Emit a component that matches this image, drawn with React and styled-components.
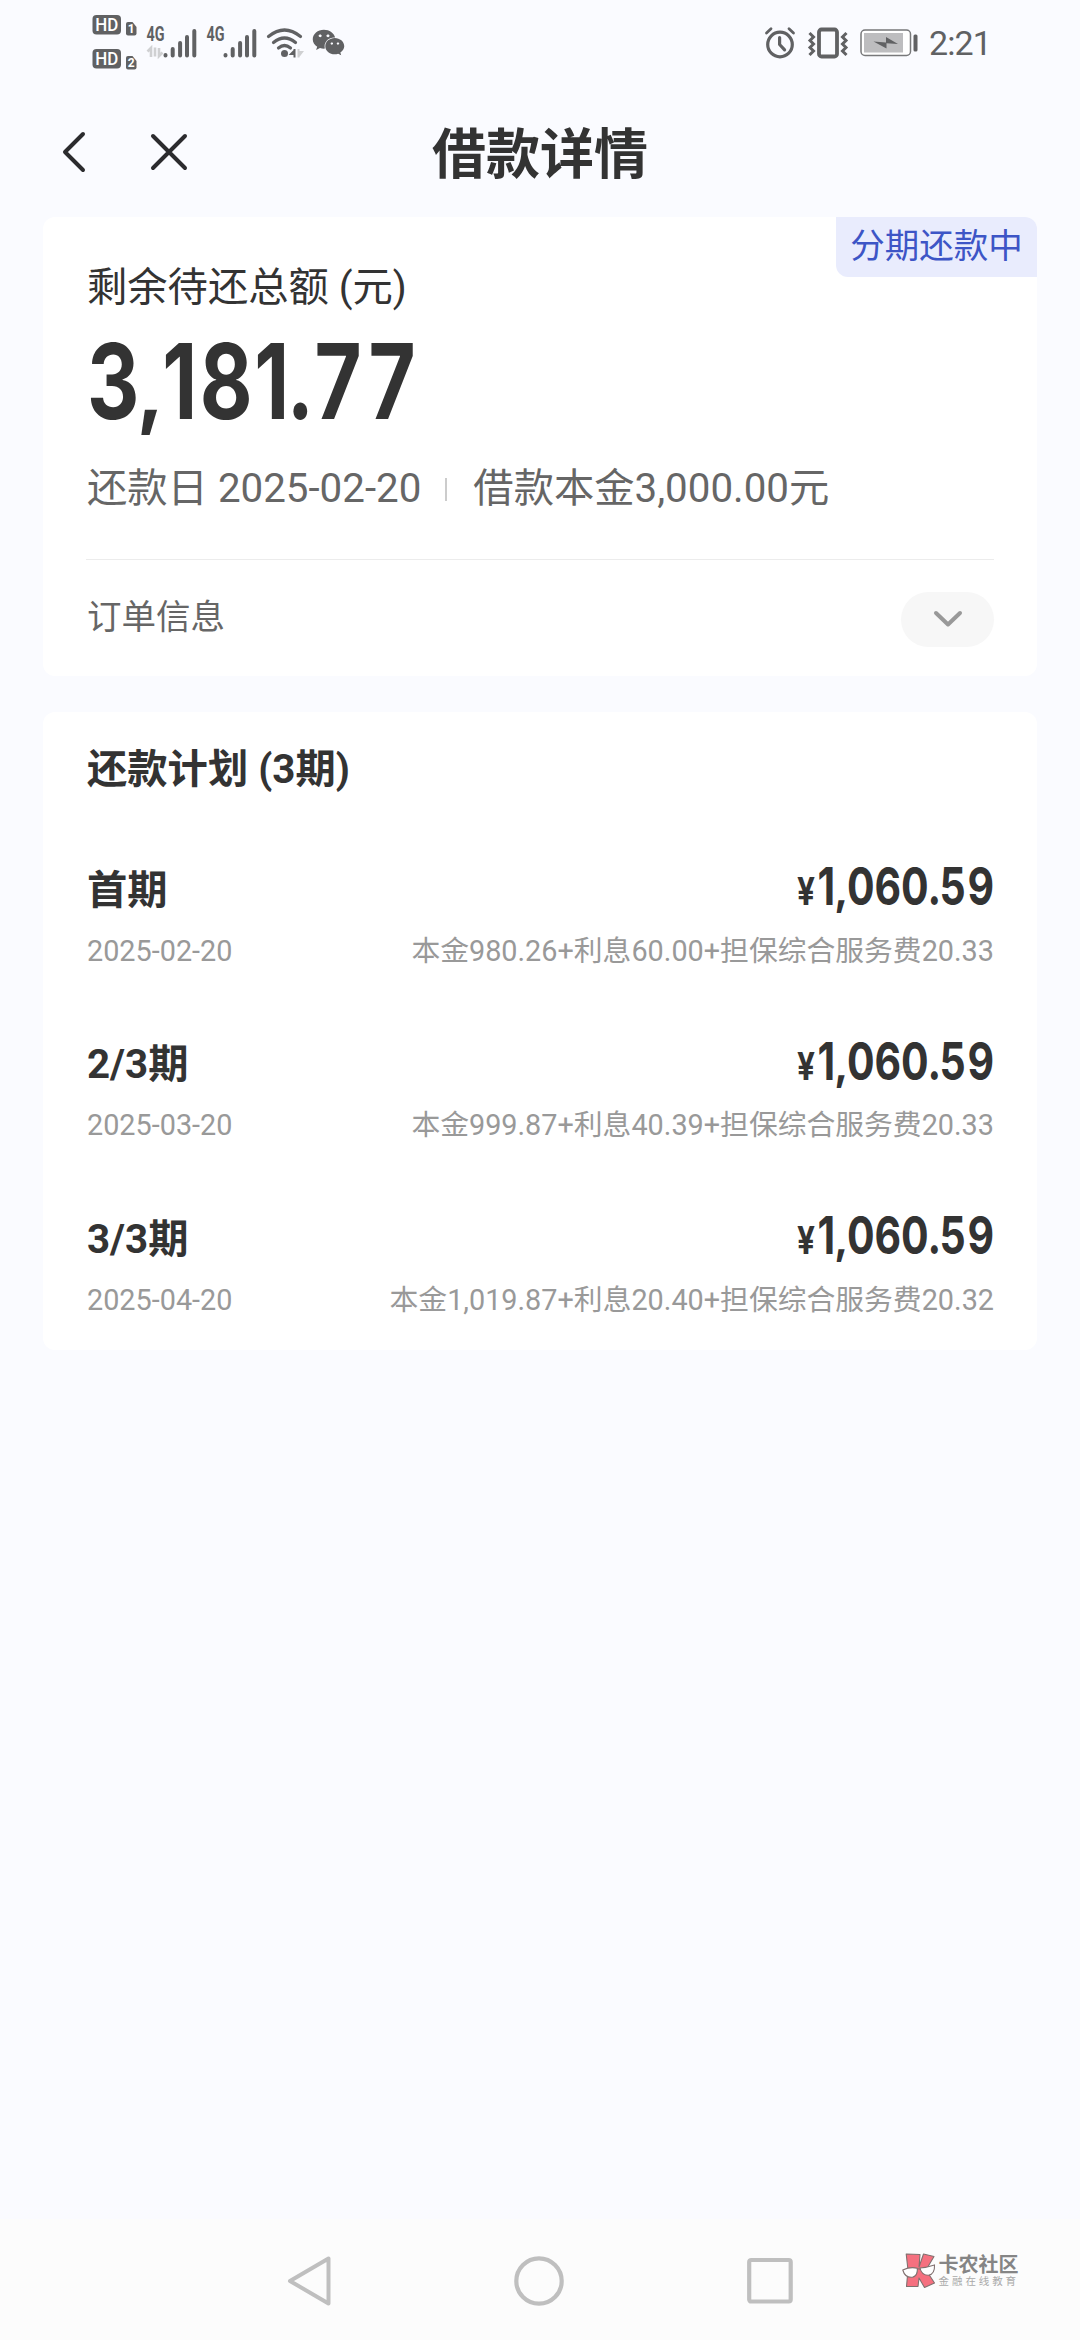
import styled, { createGlobalStyle } from "styled-components";
import { useState } from "react";
import { FaWeixin } from "react-icons/fa";

const COLORS = {
  page: '#fafbff',
  white: '#fff',
  dark: '#333',
  medium: '#666',
  light: '#999',
  status: '#606163',
  blue: '#3d55c6',
  paleBlue: '#e9ecfd',
  nav: '#fcfcfc',
  navIcon: '#bfbfbf',
};

const FONT = `Roboto, "Noto Sans CJK SC", sans-serif`;

const installments = [
  { title: '首期', date: '2025-02-20', amount: '1,060.59', detail: '本金980.26+利息60.00+担保综合服务费20.33' },
  { title: '2/3期', date: '2025-03-20', amount: '1,060.59', detail: '本金999.87+利息40.39+担保综合服务费20.33' },
  { title: '3/3期', date: '2025-04-20', amount: '1,060.59', detail: '本金1,019.87+利息20.40+担保综合服务费20.32' },
];

const HdIcon = ({ sim }) => (
  <svg width="46" height="21" viewBox="0 0 46 21">
    <rect x="0.5" y="0" width="28.5" height="19.5" rx="4" fill={COLORS.status} />
    <SvgText x="14.8" y="16" size="17.5" weight="500" fill="#fff" textLength="23">HD</SvgText>
    <path d="M34 10V18.5q0 2 2 2h6.500q2 0 2-2V12l-4-5H36q-2 0-2 2z" fill={COLORS.status} />
    <SvgText x="39.2" y="18.400" size="12" weight="700" fill="#fff">{sim}</SvgText>
  </svg>
);

const SignalIcon = ({ data }) => (
  <svg width="52" height="34" viewBox="0 0 52 34">
    <SvgText x="9.500" y="15" size="19.500" weight="700" fill={COLORS.status} textLength="18">4G</SvgText>
    {data && (
      <path d="M5 31V22L1.500 25.500M9 21.500V30.500M13 22v8l3.500-3.500" fill="none" stroke="#cfd0d2" strokeWidth="2.600" />
    )}
    <g stroke={COLORS.status} strokeWidth="4" strokeLinecap="round">
      <path d="M19.500 29v0.400M26.700 23v6.400M34.100 17v12.400M41 11v18.400M48.300 5v24.400" />
    </g>
  </svg>
);

const WifiIcon = () => (
  <svg width="38" height="32" viewBox="0 0 38 32">
    <g fill="none" stroke={COLORS.status} strokeWidth="3.200" strokeLinecap="round">
      <path d="M2.500 9.500Q18.500-3.500 34.500 9.500" />
      <path d="M7.500 15.500Q18.500 6.500 29.500 15.500" />
      <path d="M12.500 21Q18.500 16 24.500 21" />
    </g>
    <circle cx="18.500" cy="26.500" r="3.500" fill={COLORS.status} />
    <path d="M28.500 22v8.500M29 23l-4 4h4" stroke={COLORS.status} strokeWidth="2" fill={COLORS.status} />
    <path d="M32.500 22v8.500M33 29l3-4h-3" stroke="#cfd0d2" strokeWidth="2" fill="#cfd0d2" />
  </svg>
);

const AlarmIcon = () => (
  <svg width="32" height="33" viewBox="0 0 32 33">
    <g fill="none" stroke={COLORS.status} strokeWidth="3.200" strokeLinecap="round" strokeLinejoin="round">
      <circle cx="16" cy="18.500" r="12.300" />
      <path d="M15.600 11.500v7l5 5.300" />
      <path d="M2.500 7L7 2.800M29.500 7L25 2.800" strokeWidth="2.800" />
    </g>
  </svg>
);

const VibrateIcon = () => (
  <svg width="42" height="32" viewBox="0 0 42 32">
    <g fill="none" stroke={COLORS.status} strokeWidth="3">
      <rect x="12" y="2.500" width="18" height="27" rx="2.500" strokeWidth="3.800" />
      <path d="M2.500 6l4 4-3.500 3.500 3.500 3.500-3.500 3.500 3.500 3.500-4 4" />
      <path d="M39.500 6l-4 4 3.500 3.500-3.500 3.500 3.500 3.500-3.500 3.500 4 4" />
    </g>
  </svg>
);

const BatteryIcon = () => (
  <svg width="58" height="28" viewBox="0 0 58 28">
    <rect x="1" y="1" width="49.500" height="25.500" rx="4" fill="#fff" stroke="#77787a" strokeWidth="1.500" />
    <rect x="4" y="4" width="39" height="19.500" fill="#bdbdbf" />
    <path d="M13.500 12.500L26 13.500V8l12 7-11.500-.8v5.300z" fill={COLORS.status} />
    <rect x="53.500" y="5.500" width="4" height="17" rx="1.500" fill={COLORS.status} />
  </svg>
);

const BackIcon = () => (
  <svg width="24" height="42" viewBox="0 0 24 42">
    <path d="M21 3L3 21l18 18" fill="none" stroke="#2b2b2e" strokeWidth="4" strokeLinecap="round" strokeLinejoin="round" />
  </svg>
);

const CloseIcon = () => (
  <svg width="38" height="38" viewBox="0 0 38 38">
    <path d="M3 3l32 32M35 3L3 35" fill="none" stroke="#2b2b2e" strokeWidth="4" strokeLinecap="round" />
  </svg>
);

const ChevronIcon = () => (
  <svg width="30" height="18" viewBox="0 0 30 18">
    <path d="M3 3l12 11.500L27 3" fill="none" stroke={COLORS.light} strokeWidth="4" strokeLinecap="round" strokeLinejoin="round" />
  </svg>
);

const KanongLogo = () => (
  <svg width="34" height="36" viewBox="0 0 34 36">
    <g fill="#f5707f" stroke="#80706f" strokeWidth="1.100" strokeLinejoin="round">
      <path d="M4.200 1L18 1.500 17 14 21.500 1 32 3.500 24 17l8.500 13-10 4.500L17 25l-1 8.500H4.500L6 17z" />
    </g>
    <g fill="#fff" stroke="#80706f" strokeWidth="1.100">
      <path d="M0.800 17Q8 13.500 15.300 15.200 16 22.500 10.500 24.200 3 25 0.800 17z" />
      <path d="M18 15Q25 14.500 32.500 12 33 21 26.500 22.300 19.500 22.300 18 15z" />
      <path d="M15.300 16.500q1.500-1.500 3 0" fill="none" />
    </g>
  </svg>
);

const Amount = ({ value, large }) => (
  <Figure large={large}>
    {value.split('').map((char, i) => (
      <Glyph key={i} char={char}>{char}</Glyph>
    ))}
  </Figure>
);

const App = () => {
  const [open, setOpen] = useState(false);

  return (
    <Wrapper>
      <GlobalStyle />
      <StatusBar>
        <StatusGroup>
          <HdColumn>
            <HdIcon sim="1" />
            <HdIcon sim="2" />
          </HdColumn>
          <SignalIcon data />
          <SignalIcon />
          <WifiIcon />
          <FaWeixin size="33" />
        </StatusGroup>
        <StatusGroup right>
          <AlarmIcon />
          <VibrateIcon />
          <BatteryIcon />
          <Time>2:21</Time>
        </StatusGroup>
      </StatusBar>

      <Header>
        <HeaderActions>
          <IconBtn><BackIcon /></IconBtn>
          <IconBtn><CloseIcon /></IconBtn>
        </HeaderActions>
        <Title>借款详情</Title>
      </Header>

      <Main>
        <SummaryCard>
          <Badge>分期还款中</Badge>
          <Label>剩余待还总额 (元)</Label>
          <Amount value="3,181.77" large />
          <LoanInfo>
            <span>还款日 2025-02-20</span>
            <Separator />
            <span>借款本金3,000.00元</span>
          </LoanInfo>
          <OrderRow>
            <OrderLabel>订单信息</OrderLabel>
            <ToggleBtn onClick={() => setOpen(!open)}>
              <ChevronIcon />
            </ToggleBtn>
          </OrderRow>
        </SummaryCard>

        <PlanCard>
          <PlanTitle>还款计划 (3期)</PlanTitle>
          {installments.map(({ title, date, amount, detail }) => (
            <Installment key={date}>
              <InstallmentLine>
                <Period>{title}</Period>
                <Price>
                  <Currency>¥</Currency>
                  <Amount value={amount} />
                </Price>
              </InstallmentLine>
              <InstallmentDetail>
                <span>{date}</span>
                <span>{detail}</span>
              </InstallmentDetail>
            </Installment>
          ))}
        </PlanCard>
      </Main>

      <NavigationBar>
        <svg width="44" height="52" viewBox="0 0 44 52">
          <path d="M41.500 3.500v45L3 26z" fill="none" stroke={COLORS.navIcon} strokeWidth="4" strokeLinejoin="round" />
        </svg>
        <svg width="50" height="52" viewBox="0 0 50 52">
          <circle cx="25" cy="26" r="22.700" fill="none" stroke={COLORS.navIcon} strokeWidth="4.200" />
        </svg>
        <svg width="46" height="52" viewBox="0 0 46 52">
          <rect x="2.200" y="5" width="41.500" height="41.500" rx="2" fill="none" stroke={COLORS.navIcon} strokeWidth="4.200" />
        </svg>
        <Brand>
          <KanongLogo />
          <BrandText>
            <BrandName>卡农社区</BrandName>
            <BrandSlogan>金融在线教育</BrandSlogan>
          </BrandText>
        </Brand>
      </NavigationBar>
    </Wrapper>
  )
}

const GlobalStyle = createGlobalStyle`
  * {
    box-sizing: border-box;
  }
  body {
    margin: 0;
    background: ${COLORS.page};
    font-family: ${FONT};
  }
  svg {
    display: block;
    flex-shrink: 0;
    overflow: visible;
  }
`;
const SvgText = styled.text.attrs(({ textLength }) => ({
  textAnchor: 'middle',
  lengthAdjust: textLength ? 'spacingAndGlyphs' : undefined,
})).withConfig({ shouldForwardProp: prop => !['size', 'weight'].includes(prop) })`
  font-family: ${FONT};
  font-size: ${ ({size}) => size }px;
  font-weight: ${ ({weight}) => weight };
`;
const Wrapper = styled.div`
  display: flex;
  flex-direction: column;
  width: 1080px;
  height: 2340px;
  background: ${COLORS.page};
  color: ${COLORS.dark};
`;
const StatusBar = styled.div`
  display: flex;
  justify-content: space-between;
  align-items: center;
  height: 85px;
  padding: 0 89px 0 92px;
  color: ${COLORS.status};
`;
const StatusGroup = styled.div.withConfig({ shouldForwardProp: prop => prop !== 'right' })`
  display: flex;
  align-items: center;
  gap: ${ ({right}) => right ? '11px' : '8px' };
`;
const HdColumn = styled.div`
  display: flex;
  flex-direction: column;
  gap: 13px;
`;
const Time = styled.span`
  font-size: 34px;
  letter-spacing: -0.9px;
  line-height: 40px;
`;
const Header = styled.header`
  display: grid;
  grid-template-columns: 1fr auto 1fr;
  align-items: center;
  height: 132px;
  padding: 2px 61.5px 0;
`;
const HeaderActions = styled.div`
  display: flex;
  align-items: center;
  gap: 64px;
`;
const IconBtn = styled.button`
  display: flex;
  padding: 0;
  border: none;
  background: none;
`;
const Title = styled.h1`
  margin: 0;
  padding-top: 8px;
  font-size: 54px;
  font-weight: 700;
  line-height: 80px;
`;
const Main = styled.main`
  flex: 1;
  padding: 0 43px;
`;
const Card = styled.section`
  border-radius: 12px;
  background: ${COLORS.white};
`;
const SummaryCard = styled(Card)`
  position: relative;
  height: 459px;
  padding: 40.5px 43px 0;
`;
/* sits over the top right corner of the card */
const Badge = styled.div`
  position: absolute;
  top: 0;
  right: 0;
  width: 201px;
  height: 60px;
  border-radius: 0 12px 0 12px;
  background: ${COLORS.paleBlue};
  color: ${COLORS.blue};
  font-size: 34.5px;
  line-height: 58px;
  text-align: center;
`;
const Label = styled.div`
  padding-left: 1px;
  font-size: 40.3px;
  line-height: 60px;
`;
const Figure = styled.div.withConfig({ shouldForwardProp: prop => prop !== 'large' })`
  display: flex;
  width: max-content;
  font-family: Inter, Roboto, sans-serif;
  font-size: ${ ({large}) => large ? 104 : 52.5 }px;
  font-weight: 700;
  line-height: ${ ({large}) => large ? '127px' : '54px' };
`;
const GLYPH_WIDTH = { ',': 0.2, '.': 0.2, '1': 0.36 };
const Glyph = styled.span.withConfig({ shouldForwardProp: prop => prop !== 'char' })`
  display: flex;
  justify-content: center;
  width: ${ ({char}) => GLYPH_WIDTH[char] || 0.522 }em;
  transform: ${ ({char}) => char === ',' ? 'scale(0.8, 0.8)' : 'scaleX(0.78)' };
  transform-origin: 50% calc(50% + 0.36em);
`;
const LoanInfo = styled.div`
  display: flex;
  align-items: center;
  height: 79px;
  padding-left: 1px;
  color: ${COLORS.medium};
  font-size: 40.3px;
`;
const Separator = styled.div`
  width: 2px;
  height: 23px;
  margin: 11px 26px 0 24px;
  background: #ccc;
`;
const OrderRow = styled.div`
  display: flex;
  justify-content: space-between;
  align-items: center;
  height: 119px;
  margin-top: 35.5px;
  border-top: 1px solid #ececec;
`;
const OrderLabel = styled.span`
  padding: 0 0 10px 1px;
  color: ${COLORS.medium};
  font-size: 34.5px;
`;
const ToggleBtn = styled.button`
  display: flex;
  align-items: center;
  justify-content: center;
  width: 93px;
  height: 55px;
  border: none;
  border-radius: 28px;
  background: #f7f7f7;
`;
const PlanCard = styled(Card)`
  height: 638px;
  margin-top: 36px;
  padding: 27.5px 43px 0;
`;
const PlanTitle = styled.h2`
  margin: 0 0 61px;
  padding-left: 1px;
  font-size: 40.3px;
  font-weight: 700;
  line-height: 60px;
`;
const Installment = styled.div`
  height: 174.5px;
`;
const InstallmentLine = styled.div`
  display: flex;
  justify-content: space-between;
  align-items: center;
  height: 60px;
`;
const Period = styled.h3`
  margin: 0;
  padding-left: 1px;
  font-size: 40.3px;
  font-weight: 700;
  line-height: 60px;
`;
const Price = styled.div`
  display: flex;
  align-items: baseline;
  margin-bottom: 9px;
`;
const Currency = styled.span`
  font-family: Inter, Roboto, sans-serif;
  font-size: 38.5px;
  font-weight: 700;
  line-height: 1;
  transform: scaleX(0.82);
`;
const InstallmentDetail = styled.div`
  display: flex;
  justify-content: space-between;
  height: 62px;
  padding-left: 1px;
  color: ${COLORS.light};
  font-size: 28.8px;
  line-height: 60px;
`;
const NavigationBar = styled.nav`
  display: flex;
  height: 121px;
  padding: 36px 61px 0 287px;
  background: ${COLORS.nav};

  svg + svg {
    margin-left: 183px;
  }
`;
const Brand = styled.div`
  display: flex;
  align-items: flex-start;
  gap: 3px;
  margin-left: auto;
  margin-top: -2px;
`;
const BrandText = styled.div`
  display: flex;
  flex-direction: column;
  padding-top: 1.5px;
`;
const BrandName = styled.span`
  color: #858585;
  font-size: 20px;
  font-weight: 700;
  line-height: 20px;
`;
const BrandSlogan = styled.span`
  color: #aaa;
  font-size: 10.5px;
  letter-spacing: 2.9px;
  line-height: 14px;
`;

export default App;
